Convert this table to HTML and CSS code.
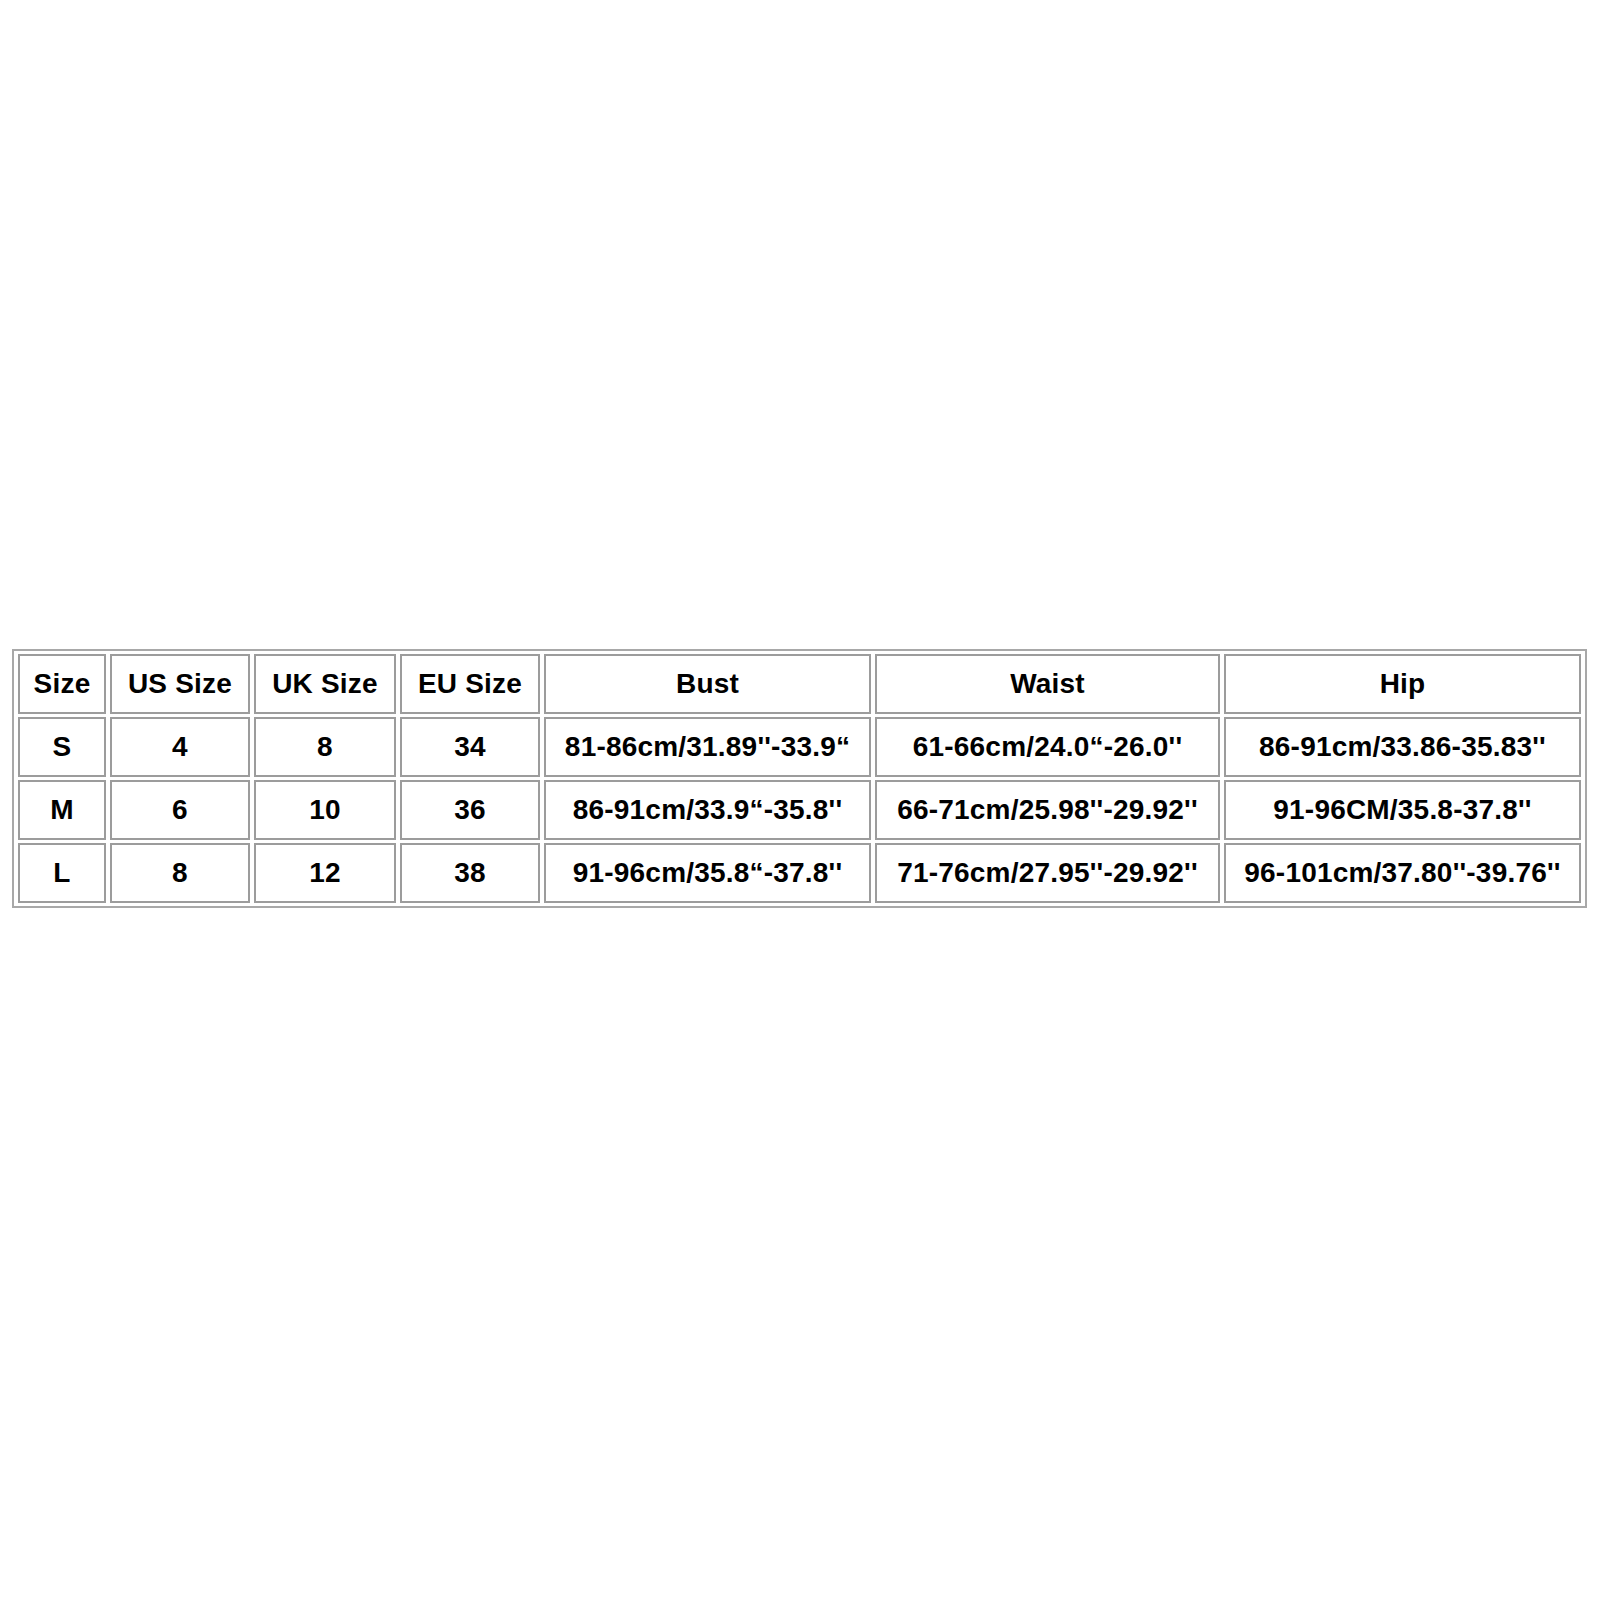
FILE: index.html
```html
<!DOCTYPE html>
<html>
<head>
<meta charset="utf-8">
<link rel="stylesheet" href="styles.css">
</head>
<body>
<div class="page">
<table class="sizes">
<colgroup>
<col class="c1"><col class="c2"><col class="c3"><col class="c4"><col class="c5"><col class="c6"><col class="c7">
</colgroup>
<tr><td>Size</td><td>US Size</td><td>UK Size</td><td>EU Size</td><td>Bust</td><td>Waist</td><td>Hip</td></tr>
<tr><td>S</td><td>4</td><td>8</td><td>34</td><td>81-86cm/31.89''-33.9“</td><td>61-66cm/24.0“-26.0''</td><td>86-91cm/33.86-35.83''</td></tr>
<tr><td>M</td><td>6</td><td>10</td><td>36</td><td>86-91cm/33.9“-35.8''</td><td>66-71cm/25.98''-29.92''</td><td>91-96CM/35.8-37.8''</td></tr>
<tr><td>L</td><td>8</td><td>12</td><td>38</td><td>91-96cm/35.8“-37.8''</td><td>71-76cm/27.95''-29.92''</td><td>96-101cm/37.80''-39.76''</td></tr>
</table>
</div>
</body>
</html>
```
FILE: styles.css
```css
html, body {
  margin: 0;
  padding: 0;
  background: #ffffff;
}
.page {
  width: 1600px;
  height: 1600px;
  padding: 649px 0 0 12px;
  box-sizing: border-box;
}
.sizes {
  border-collapse: separate;
  border-spacing: 4px 3px;
  border: 2px solid #a8a8a8;
  table-layout: fixed;
  width: 1574px;
  font-family: "Liberation Sans", Arial, sans-serif;
  font-weight: bold;
  font-size: 28px;
  letter-spacing: 0.2px;
  color: #000;
}
.sizes td {
  border: 2px solid #9c9c9c;
  height: 60px;
  padding: 0;
  text-align: center;
  vertical-align: middle;
  box-sizing: border-box;
}
.c1 { width: 88px; }
.c2 { width: 140px; }
.c3 { width: 142px; }
.c4 { width: 140px; }
.c5 { width: 327px; }
.c6 { width: 345px; }
.c7 { width: 357px; }
```
